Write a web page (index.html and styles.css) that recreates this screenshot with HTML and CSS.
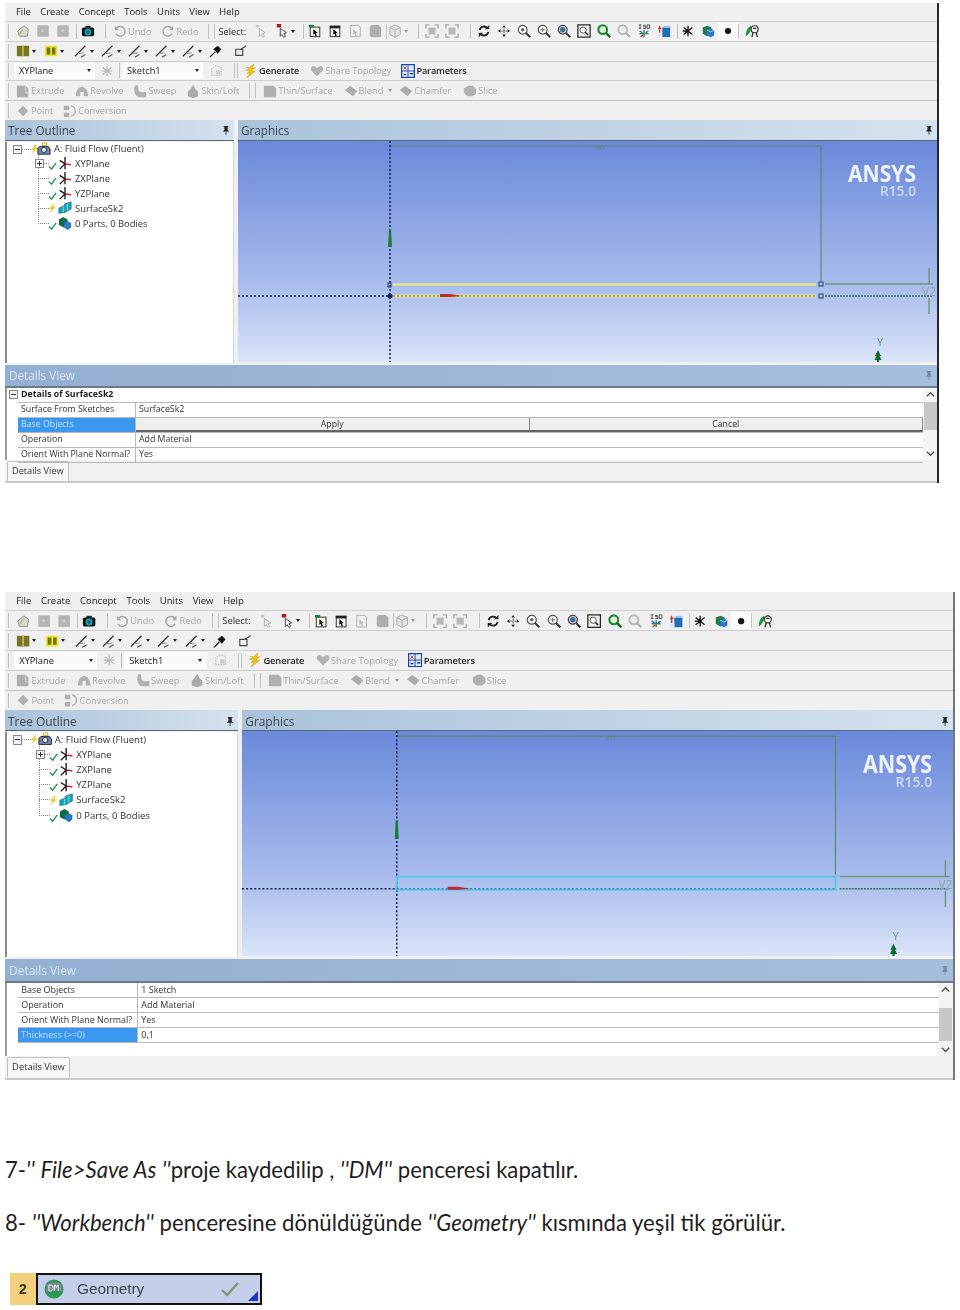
FILE: index.html
```html
<!DOCTYPE html>
<html lang="tr">
<head>
<meta charset="utf-8">
<title>DesignModeler</title>
<link rel="stylesheet" href="styles.css">
</head>
<body>
<svg class="defs" width="0" height="0" aria-hidden="true">
  <symbol id="i-page" viewBox="0 0 16 16"><path d="M2 8l7-6 5 4-1 8H4z" fill="#d8d8d8" stroke="#8a8a8a"/><path d="M3 13l5-7" stroke="#b5c48a" stroke-width="2"/></symbol>
  <symbol id="i-sq" viewBox="0 0 16 16"><rect x="1.500" y="1.500" width="13" height="13" fill="#b4b4b4"/><rect x="6" y="6" width="3" height="3" fill="#cfcfcf"/></symbol>
  <symbol id="i-cam" viewBox="0 0 16 16"><rect x="1" y="4" width="14" height="10" rx="2" fill="#111"/><rect x="5" y="2" width="6" height="3" fill="#222"/><circle cx="8" cy="9" r="4" fill="#19a5b8"/><circle cx="8" cy="9" r="2" fill="#0c5f70"/></symbol>
  <symbol id="i-undo" viewBox="0 0 16 16"><path d="M4 5a5.500 5.500 0 1 1-.5 6" fill="none" stroke="#a5a5a5" stroke-width="1.600"/><path d="M2 2v5h5z" fill="#a5a5a5"/></symbol>
  <symbol id="i-redo" viewBox="0 0 16 16"><path d="M12 5a5.500 5.500 0 1 0 .5 6" fill="none" stroke="#a5a5a5" stroke-width="1.600"/><path d="M14 2v5H9z" fill="#a5a5a5"/></symbol>
  <symbol id="i-sel1" viewBox="0 0 16 16"><path d="M6 5l7 5-3 1 2 3-2 1-2-3-2 2z" fill="#eee" stroke="#aaa"/><rect x="2" y="1" width="4" height="3" fill="#c8c8c8"/></symbol>
  <symbol id="i-sel2" viewBox="0 0 16 16"><path d="M6 5l7 5-3 1 2 3-2 1-2-3-2 2z" fill="#fff" stroke="#333"/><rect x="2" y="0" width="5" height="4" fill="#a81c22"/></symbol>
  <symbol id="i-b1" viewBox="0 0 16 16"><rect x="2.500" y="3.500" width="11" height="11" fill="#f2f2e8" stroke="#222"/><path d="M1 1h6v3H1z" fill="#1a7a4a"/><path d="M6 6l5 4-2 .5 1 3-1.500.5-1-3-1.500 1z" fill="#111"/></symbol>
  <symbol id="i-b2" viewBox="0 0 16 16"><rect x="2.500" y="2.500" width="11" height="12" fill="#f5f5f5" stroke="#222"/><rect x="2" y="2" width="12" height="3" fill="#222"/><path d="M6 6l5 4-2 .5 1 3-1.500.5-1-3-1.500 1z" fill="#111"/></symbol>
  <symbol id="i-b3" viewBox="0 0 16 16"><path d="M3 1.500h9l2 2v11H3z" fill="#efefef" stroke="#aaa"/><path d="M6 6l5 4-2 .5 1 3-1.500.5-1-3-1.500 1z" fill="#bbb"/></symbol>
  <symbol id="i-b4" viewBox="0 0 16 16"><path d="M4 1h8l3 3v10l-2 1H4l-2-2V3z" fill="#aeaeae"/></symbol>
  <symbol id="i-cube" viewBox="0 0 16 16"><path d="M8 1l6 3v8l-6 3-6-3V4z" fill="#e4e4e4" stroke="#aaa"/><path d="M2 4l6 3 6-3M8 7v8" stroke="#aaa" fill="none"/></symbol>
  <symbol id="i-fit1" viewBox="0 0 16 16"><rect x="4" y="4" width="8" height="8" fill="#b8b8b8"/><path d="M1 5V1h4M11 1h4v4M15 11v4h-4M5 15H1v-4" stroke="#aaa" fill="none" stroke-width="1.500"/></symbol>
  <symbol id="i-rot" viewBox="0 0 16 16"><path d="M3 7a5 5 0 0 1 9-2M13 9a5 5 0 0 1-9 2" fill="none" stroke="#222" stroke-width="2"/><path d="M14 1v5H9zM2 15v-5h5z" fill="#222"/></symbol>
  <symbol id="i-pan" viewBox="0 0 16 16"><path d="M8 1l2 3H6zM8 15l-2-3h4zM1 8l3-2v4zM15 8l-3 2V6z" fill="#222"/><path d="M8 4v8M4 8h8" stroke="#777"/></symbol>
  <symbol id="i-zoom" viewBox="0 0 16 16"><circle cx="6.500" cy="6.500" r="5" fill="#fff" stroke="#555" stroke-width="1.400"/><path d="M10 10l5 5" stroke="#333" stroke-width="2.200"/><circle cx="6.500" cy="6.500" r="2" fill="#666"/></symbol>
  <symbol id="i-zplus" viewBox="0 0 16 16"><circle cx="6.500" cy="6.500" r="5" fill="#fff" stroke="#555" stroke-width="1.400"/><path d="M10 10l5 5" stroke="#333" stroke-width="2.200"/><path d="M4 6.500h5M6.500 4v5" stroke="#555"/></symbol>
  <symbol id="i-zdot" viewBox="0 0 16 16"><circle cx="6.500" cy="6.500" r="5" fill="#c9d4e4" stroke="#445" stroke-width="1.400"/><path d="M10 10l5 5" stroke="#333" stroke-width="2.200"/><circle cx="6.500" cy="6.500" r="3" fill="#4a6a8a"/></symbol>
  <symbol id="i-zbox" viewBox="0 0 16 16"><rect x="1" y="1" width="14" height="14" fill="#f4f4f4" stroke="#222" stroke-width="1.400"/><circle cx="7" cy="7" r="3.500" fill="#fff" stroke="#444"/><path d="M9.500 9.500l3 3" stroke="#222" stroke-width="1.800"/></symbol>
  <symbol id="i-zgreen" viewBox="0 0 16 16"><circle cx="6.500" cy="6.500" r="5" fill="#dff0d8" stroke="#1d8a3a" stroke-width="2.400"/><path d="M10 10l5 5" stroke="#146a28" stroke-width="2.600"/></symbol>
  <symbol id="i-zgrey" viewBox="0 0 16 16"><circle cx="6.500" cy="6.500" r="5" fill="#eee" stroke="#b8b8b8" stroke-width="2.200"/><path d="M10 10l5 5" stroke="#b0b0b0" stroke-width="2.400"/></symbol>
  <symbol id="i-iso" viewBox="0 0 16 16"><path d="M2 1h3M3.500 1v4M2 5h3M10 1.500H7.500v1.500H10v2H7M11.500 1h3v4h-3z" fill="none" stroke="#333" stroke-width=".9"/><path d="M8 7v8M3 11h10" stroke="#2a8a4a" stroke-width="1.600"/><path d="M3 8l3 2M13 8l-3 2" stroke="#2a5ac8" stroke-width="1.600"/><path d="M4 15l3-3" stroke="#c33" stroke-width="1.400"/></symbol>
  <symbol id="i-nav" viewBox="0 0 16 16"><path d="M6 4h9v11H6z" fill="#1f6fb4"/><path d="M3 2v8M1 5h4" stroke="#c33" stroke-width="1.500"/><path d="M6 4l2-2h7v2z" fill="#9fc6e8"/><path d="M1 11h5v4H1z" fill="#dbe8f4"/></symbol>
  <symbol id="i-star" viewBox="0 0 16 16"><path d="M8 2v12M3 4l10 8M13 4L3 12M2 8h5" stroke="#111" stroke-width="1.500"/></symbol>
  <symbol id="i-body" viewBox="0 0 16 16"><path d="M2 4l5-2 5 2v7l-5 3-5-3z" fill="#1e7a50"/><path d="M7 7l4-2 4 2v6l-4 2-4-2z" fill="#2a7ac8"/><path d="M7 7l4 2 4-2" stroke="#bcd" fill="none"/></symbol>
  <symbol id="i-dot" viewBox="0 0 16 16"><circle cx="8" cy="8" r="3.500" fill="#111"/></symbol>
  <symbol id="i-leaf" viewBox="0 0 16 16"><path d="M1 14C1 7 3 4 7 2c0 6-2 9-6 12z" fill="#1e9a3a"/><circle cx="11" cy="6" r="4" fill="#fff" stroke="#333" stroke-width="1.400"/><path d="M9 10l-1 5M13 10l1 5M9 5h4" stroke="#333" stroke-width="1.500"/></symbol>
  <symbol id="i-olive" viewBox="0 0 16 16"><rect x="1" y="2" width="14" height="12" fill="#77761f"/><path d="M8 2v12" stroke="#b6b568" stroke-width="2"/></symbol>
  <symbol id="i-yellow" viewBox="0 0 16 16"><rect x="1" y="2" width="14" height="12" fill="#e9e72c"/><rect x="3" y="4" width="4" height="8" fill="#75741a"/><rect x="9" y="4" width="4" height="8" fill="#75741a"/></symbol>
  <symbol id="i-ln" viewBox="0 0 16 16"><path d="M1 14L13 2" stroke="#333" stroke-width="1.400"/><path d="M5 11l6-1" stroke="#999" stroke-width="1.200"/><path d="M8 15l5-3" stroke="#666" stroke-width="1.400"/></symbol>
  <symbol id="i-pin" viewBox="0 0 16 16"><path d="M1 15l6-6" stroke="#111" stroke-width="1.500"/><path d="M5 6l5-4 4 4-4 5z" fill="#111"/></symbol>
  <symbol id="i-flag" viewBox="0 0 16 16"><path d="M2 6h8v7H2z" fill="none" stroke="#444" stroke-width="1.300"/><path d="M8 6l6-4" stroke="#444" stroke-width="1.300"/></symbol>
  <symbol id="i-axis" viewBox="0 0 16 16"><path d="M8 2v12M3 4l10 8M13 4L3 12M2 8h12" stroke="#b8b8b8" stroke-width="1.200"/></symbol>
  <symbol id="i-sk" viewBox="0 0 16 16"><path d="M2 13V5l5-3 6 2v9z" fill="none" stroke="#bbb" stroke-dasharray="2 1"/><path d="M7 7h5v5H7z" fill="#ccc"/></symbol>
  <symbol id="i-bolt" viewBox="0 0 16 16"><path d="M11 0L3 7h4l-4 4 4-1-4 6 10-8H9l4-4-3 1z" fill="#f1c40f" stroke="#c69a08" stroke-width=".5"/><path d="M2 4h4M1 7h3" stroke="#a8c040"/></symbol>
  <symbol id="i-heart" viewBox="0 0 16 16"><path d="M8 14L1 7c-1-6 5-6 7-2 2-4 8-4 7 2z" fill="#b2b2b2"/></symbol>
  <symbol id="i-par" viewBox="0 0 16 16"><rect x=".7" y=".7" width="14.600" height="14.600" fill="#dfe6f4" stroke="#1a46a8" stroke-width="1.400"/><path d="M1 8h14M8 1v14" stroke="#1a46a8"/><path d="M3 3l3 3M3 6l3-3" stroke="#c33"/><path d="M10 11h4M3 12h3" stroke="#224" stroke-width="1.300"/></symbol>
  <symbol id="i-ext" viewBox="0 0 16 16"><path d="M1 2h10l3 3v10H1z" fill="#adadad"/><path d="M11 2v8h3" stroke="#ddd" fill="none"/></symbol>
  <symbol id="i-rev" viewBox="0 0 16 16"><path d="M1 14c0-7 3-10 7-11 4 1 7 4 7 11H10V9H6v5z" fill="#b0b0b0"/></symbol>
  <symbol id="i-swp" viewBox="0 0 16 16"><path d="M2 2c3-2 4 0 4 3 0 4 2 5 9 4v6H7C3 15 0 8 2 2z" fill="#b0b0b0"/></symbol>
  <symbol id="i-skn" viewBox="0 0 16 16"><path d="M8 1l3 5 3 3v5l-6 2-6-2V9l3-3z" fill="#aaa"/></symbol>
  <symbol id="i-thn" viewBox="0 0 16 16"><path d="M1 2h11l3 3v10H1z" fill="#b0b0b0"/></symbol>
  <symbol id="i-bln" viewBox="0 0 16 16"><path d="M1 7l6-5 8 6-5 6z" fill="#acacac"/></symbol>
  <symbol id="i-slc" viewBox="0 0 16 16"><path d="M1 5l5-3h5l4 4v5l-4 3H5L1 10z" fill="#b0b0b0"/></symbol>
  <symbol id="i-pnt" viewBox="0 0 16 16"><path d="M8 2l6 6-6 6-6-6z" fill="#b0b0b0"/></symbol>
  <symbol id="i-cnv" viewBox="0 0 16 16"><rect x="1" y="2" width="6" height="5" fill="#b0b0b0"/><rect x="1" y="10" width="6" height="5" fill="#b0b0b0"/><path d="M9 2c4 1 5 4 5 6s-1 5-5 6" fill="none" stroke="#aaa" stroke-width="1.400"/></symbol>
  <symbol id="i-pinv" viewBox="0 0 10 12"><path d="M2 1h6v1H7v4l2 2H1l2-2V2H2zM4.500 8h1v4h-1z" fill="#222"/></symbol>
  <symbol id="i-tri" viewBox="0 0 16 16"><path d="M8 1v8" stroke="#111" stroke-width="1.500"/><path d="M2 5l6 4M2 15l6-6" stroke="#111" stroke-width="1.500"/><path d="M8 9l7 1" stroke="#c33" stroke-width="1.800"/><path d="M8 9v6" stroke="#111" stroke-width="1.500"/></symbol>
  <symbol id="i-chk" viewBox="0 0 10 10"><path d="M1 6l3 3 5-7" fill="none" stroke="#2a9a4a" stroke-width="1.600"/></symbol>
  <symbol id="i-bz" viewBox="0 0 10 12"><path d="M7 0L1 7h3l-3 5 8-7H6z" fill="#ecd23a"/></symbol>
  <symbol id="i-src" viewBox="0 0 16 16"><path d="M3 5h10l2 3v6H1V7z" fill="#6e8aa8" stroke="#223"/><circle cx="8" cy="9" r="3" fill="#d7e6f2" stroke="#223"/><path d="M6 1h5v3H6z" fill="none" stroke="#c8a818"/></symbol>
  <symbol id="i-srf" viewBox="0 0 16 16"><path d="M1 8l5-2 2-3 7-2v8l-7 4-7 1z" fill="#17a5b8" stroke="#0a5f6c" stroke-width=".7"/><path d="M6 6v7M11 3v8" stroke="#bdeef4" stroke-width=".8"/></symbol>
  <symbol id="i-prt" viewBox="0 0 16 16"><path d="M1 4l5-3 5 3v6l-5 3-5-3z" fill="#106a4a"/><path d="M7 8l4-2 4 2v5l-4 3-4-3z" fill="#2a78c8"/></symbol>
  <symbol id="i-arrow" viewBox="0 0 10 10"><path d="M1 7l4-4 4 4" fill="none" stroke="#555" stroke-width="1.500"/></symbol>
  <symbol id="i-arrowd" viewBox="0 0 10 10"><path d="M1 3l4 4 4-4" fill="none" stroke="#555" stroke-width="1.500"/></symbol>
  <symbol id="i-dm" viewBox="0 0 20 20"><circle cx="10" cy="10" r="9.500" fill="#2a9a56"/><path d="M2 7a9 7 0 0 1 16 0v5H2z" fill="#7d8592"/><path d="M5 6h2a2 3 0 0 1 0 6H5zM10.500 12V6h1l1 3 1-3h1v6" fill="none" stroke="#e8eef4" stroke-width="1"/></symbol>
</svg>

<section class="shot shot-a">
  <nav class="menu"><span>File</span><span>Create</span><span>Concept</span><span>Tools</span><span>Units</span><span>View</span><span>Help</span></nav>
  <div class="tb">
    <i class="grip"></i>
    <span class="btn m4"><svg class="ic"><use href="#i-page"/></svg></span><span class="btn"><svg class="ic"><use href="#i-sq"/></svg></span><span class="btn"><svg class="ic"><use href="#i-sq"/></svg></span>
    <i class="grip m3"></i>
    <span class="btn m1"><svg class="ic"><use href="#i-cam"/></svg></span>
    <i class="grip m7"></i>
    <span class="tool off m7"><svg class="ic"><use href="#i-undo"/></svg>Undo</span>
    <span class="tool off m10"><svg class="ic"><use href="#i-redo"/></svg>Redo</span>
    <i class="grip m10"></i><i class="grip m5"></i>
    <span class="tool m3">Select:</span>
    <span class="btn m5"><svg class="ic"><use href="#i-sel1"/></svg></span>
    <span class="btn m4"><svg class="ic"><use href="#i-sel2"/></svg><i class="drop"></i></span>
    <i class="grip m8"></i>
    <span class="btn m1"><svg class="ic"><use href="#i-b1"/></svg></span><span class="btn"><svg class="ic"><use href="#i-b2"/></svg></span><span class="btn"><svg class="ic"><use href="#i-b3"/></svg></span><span class="btn"><svg class="ic"><use href="#i-b4"/></svg></span>
    <i class="grip m1"></i>
    <span class="btn m1"><svg class="ic"><use href="#i-cube"/></svg><i class="drop pale"></i></span>
    <i class="grip m10"></i>
    <span class="btn m3"><svg class="ic"><use href="#i-fit1"/></svg></span><span class="btn"><svg class="ic"><use href="#i-fit1"/></svg></span>
    <i class="grip m8"></i>
    <span class="btn m3"><svg class="ic"><use href="#i-rot"/></svg></span><span class="btn"><svg class="ic"><use href="#i-pan"/></svg></span><span class="btn"><svg class="ic"><use href="#i-zoom"/></svg></span><span class="btn"><svg class="ic"><use href="#i-zplus"/></svg></span><span class="btn"><svg class="ic"><use href="#i-zdot"/></svg></span><span class="btn"><svg class="ic"><use href="#i-zbox"/></svg></span><span class="btn"><svg class="ic"><use href="#i-zgreen"/></svg></span><span class="btn"><svg class="ic"><use href="#i-zgrey"/></svg></span><span class="btn"><svg class="ic"><use href="#i-iso"/></svg></span><span class="btn"><svg class="ic"><use href="#i-nav"/></svg></span>
    <i class="grip m3"></i>
    <span class="btn"><svg class="ic"><use href="#i-star"/></svg></span><span class="btn"><svg class="ic"><use href="#i-body"/></svg></span><span class="btn lit"><svg class="ic"><use href="#i-dot"/></svg></span>
    <i class="grip"></i>
    <span class="btn m3"><svg class="ic"><use href="#i-leaf"/></svg></span>
  </div>
  <div class="tb">
    <i class="grip"></i>
    <span class="btn w22 m6"><svg class="ic"><use href="#i-olive"/></svg><i class="drop"></i></span>
    <span class="btn w22 m6"><svg class="ic"><use href="#i-yellow"/></svg><i class="drop"></i></span>
    <span class="btn w27 m5"><svg class="ic"><use href="#i-ln"/></svg><i class="drop"></i></span><span class="btn w27"><svg class="ic"><use href="#i-ln"/></svg><i class="drop"></i></span><span class="btn w27"><svg class="ic"><use href="#i-ln"/></svg><i class="drop"></i></span><span class="btn w27"><svg class="ic"><use href="#i-ln"/></svg><i class="drop"></i></span><span class="btn w27"><svg class="ic"><use href="#i-ln"/></svg><i class="drop"></i></span>
    <span class="btn m1"><svg class="ic"><use href="#i-pin"/></svg></span>
    <span class="btn m5"><svg class="ic"><use href="#i-flag"/></svg></span>
  </div>
  <div class="tb">
    <i class="grip"></i>
    <span class="combo m5">XYPlane<i class="drop"></i></span>
    <span class="btn m2"><svg class="ic"><use href="#i-axis"/></svg></span>
    <i class="grip m2"></i>
    <span class="combo m2">Sketch1<i class="drop"></i></span>
    <span class="btn m4"><svg class="ic"><use href="#i-sk"/></svg></span>
    <i class="grip m7"></i><i class="grip m2"></i>
    <span class="tool strong m6"><svg class="ic"><use href="#i-bolt"/></svg>Generate</span>
    <span class="tool off m11"><svg class="ic"><use href="#i-heart"/></svg>Share Topology</span>
    <span class="tool strong m10"><svg class="ic"><use href="#i-par"/></svg>Parameters</span>
  </div>
  <div class="tb">
    <i class="grip"></i>
    <span class="tool off m7"><svg class="ic"><use href="#i-ext"/></svg>Extrude</span>
    <span class="tool off m11"><svg class="ic"><use href="#i-rev"/></svg>Revolve</span>
    <span class="tool off m10"><svg class="ic"><use href="#i-swp"/></svg>Sweep</span>
    <span class="tool off m10"><svg class="ic"><use href="#i-skn"/></svg>Skin/Loft</span>
    <i class="grip m10"></i><i class="grip m5"></i>
    <span class="tool off m7"><svg class="ic"><use href="#i-thn"/></svg>Thin/Surface</span>
    <span class="tool off m11"><svg class="ic"><use href="#i-bln"/></svg>Blend<i class="drop pale m4"></i></span>
    <span class="tool off m7"><svg class="ic"><use href="#i-bln"/></svg>Chamfer</span>
    <span class="tool off m12"><svg class="ic"><use href="#i-slc"/></svg>Slice</span>
  </div>
  <div class="tb last">
    <i class="grip"></i>
    <span class="tool off m7"><svg class="ic"><use href="#i-pnt"/></svg>Point</span>
    <span class="tool off m10"><svg class="ic"><use href="#i-cnv"/></svg>Conversion</span>
  </div>
  <div class="panes">
    <aside class="tree-pane">
      <header class="pane-head">Tree Outline<svg class="pin"><use href="#i-pinv"/></svg></header>
      <ul class="tree">
        <li class="root"><i class="box minus"></i><svg class="bz"><use href="#i-bz"/></svg><svg class="ic"><use href="#i-src"/></svg><span>A: Fluid Flow (Fluent)</span></li>
        <li><i class="box plus"></i><svg class="ck"><use href="#i-chk"/></svg><svg class="ic"><use href="#i-tri"/></svg><span>XYPlane</span></li>
        <li><svg class="ck"><use href="#i-chk"/></svg><svg class="ic"><use href="#i-tri"/></svg><span>ZXPlane</span></li>
        <li><svg class="ck"><use href="#i-chk"/></svg><svg class="ic"><use href="#i-tri"/></svg><span>YZPlane</span></li>
        <li><svg class="bz"><use href="#i-bz"/></svg><svg class="ic"><use href="#i-srf"/></svg><span>SurfaceSk2</span></li>
        <li class="end"><svg class="ck"><use href="#i-chk"/></svg><svg class="ic"><use href="#i-prt"/></svg><span>0 Parts, 0 Bodies</span></li>
      </ul>
    </aside>
    <main class="gfx-pane">
      <header class="pane-head">Graphics<svg class="pin"><use href="#i-pinv"/></svg></header>
      <div class="canvas">
        <svg class="sketch" viewBox="0 0 697 221" width="697" height="221">
          <path d="M152 5H583V140" fill="none" stroke="#5a8a66" stroke-width="1.200"/>
          <text x="358" y="9" class="dim">H1</text>
          <path d="M152 0V221" stroke="#101c50" stroke-width="1.500" stroke-dasharray="2 2"/>
          <path d="M0 155H152" stroke="#101c50" stroke-width="1.500" stroke-dasharray="2 2"/>
          <path d="M151 88l2 0 1 18h-4z" fill="#1e7a3a"/>
          <path d="M155 143.500H578" stroke="#e4e48c" stroke-width="2.500"/>
          <path d="M155 155H578" stroke="#e4e48c" stroke-width="3"/>
          <path d="M155 155H578" stroke="#5a6a5a" stroke-dasharray="2 2"/>
          <rect x="150" y="142" width="3" height="4" fill="none" stroke="#223a6a"/>
          <rect x="581" y="141" width="4" height="4" fill="none" stroke="#223a6a"/>
          <rect x="581" y="153" width="4" height="4" fill="none" stroke="#223a6a"/>
          <circle cx="152" cy="155" r="2.500" fill="#0a1a60"/>
          <path d="M202 153h10l12 2-12 1h-10z" fill="#c0282c"/>
          <path d="M587 143H695" stroke="#6f9a78" stroke-width="1.500"/>
          <path d="M587 155H695" stroke="#3d6a5a" stroke-width="1.500" stroke-dasharray="2 1"/>
          <path d="M691 127V143M691 157V173" stroke="#6f9a78" stroke-width="1.500"/>
          <text x="684" y="155" class="dim big">V2</text>
          <text x="639" y="205" class="dim axis">Y</text>
          <path d="M640 209l3 6h-1.500l2 4h-2.500v3h-2v-3h-2.500l2-4h-1.500z" fill="#0e6a2c"/>
          <text x="610" y="41" class="logo" textLength="68" lengthAdjust="spacingAndGlyphs">ANSYS</text>
          <text x="642" y="55" class="rel" textLength="36" lengthAdjust="spacingAndGlyphs">R15.0</text>
        </svg>
      </div>
    </main>
  </div>
  <section class="details">
    <header class="details-head">Details View<svg class="pin faint"><use href="#i-pinv"/></svg></header>
    <div class="details-body">
      <div class="grid">
        <div class="row group"><i class="box gbox"></i><span class="full">Details of SurfaceSk2</span></div>
        <div class="row"><span class="k">Surface From Sketches</span><span class="v">SurfaceSk2</span></div>
        <div class="row"><span class="k sel">Base Objects</span><span class="v actions"><b>Apply</b><b>Cancel</b></span></div>
        <div class="row"><span class="k">Operation</span><span class="v">Add Material</span></div>
        <div class="row"><span class="k">Orient With Plane Normal?</span><span class="v">Yes</span></div>
      </div>
      <div class="scroll"><svg class="sa"><use href="#i-arrow"/></svg><i class="thumb thumb-a"></i><svg class="sa"><use href="#i-arrowd"/></svg></div>
    </div>
    <div class="tabs"><span class="tab">Details View</span></div>
  </section>
</section>

<section class="shot shot-b">
  <nav class="menu"><span>File</span><span>Create</span><span>Concept</span><span>Tools</span><span>Units</span><span>View</span><span>Help</span></nav>
  <div class="tb">
    <i class="grip"></i>
    <span class="btn m4"><svg class="ic"><use href="#i-page"/></svg></span><span class="btn"><svg class="ic"><use href="#i-sq"/></svg></span><span class="btn"><svg class="ic"><use href="#i-sq"/></svg></span>
    <i class="grip m3"></i>
    <span class="btn m1"><svg class="ic"><use href="#i-cam"/></svg></span>
    <i class="grip m7"></i>
    <span class="tool off m7"><svg class="ic"><use href="#i-undo"/></svg>Undo</span>
    <span class="tool off m10"><svg class="ic"><use href="#i-redo"/></svg>Redo</span>
    <i class="grip m10"></i><i class="grip m5"></i>
    <span class="tool m3">Select:</span>
    <span class="btn m5"><svg class="ic"><use href="#i-sel1"/></svg></span>
    <span class="btn m4"><svg class="ic"><use href="#i-sel2"/></svg><i class="drop"></i></span>
    <i class="grip m8"></i>
    <span class="btn m1"><svg class="ic"><use href="#i-b1"/></svg></span><span class="btn"><svg class="ic"><use href="#i-b2"/></svg></span><span class="btn"><svg class="ic"><use href="#i-b3"/></svg></span><span class="btn"><svg class="ic"><use href="#i-b4"/></svg></span>
    <i class="grip m1"></i>
    <span class="btn m1"><svg class="ic"><use href="#i-cube"/></svg><i class="drop pale"></i></span>
    <i class="grip m10"></i>
    <span class="btn m3"><svg class="ic"><use href="#i-fit1"/></svg></span><span class="btn"><svg class="ic"><use href="#i-fit1"/></svg></span>
    <i class="grip m8"></i>
    <span class="btn m3"><svg class="ic"><use href="#i-rot"/></svg></span><span class="btn"><svg class="ic"><use href="#i-pan"/></svg></span><span class="btn"><svg class="ic"><use href="#i-zoom"/></svg></span><span class="btn"><svg class="ic"><use href="#i-zplus"/></svg></span><span class="btn"><svg class="ic"><use href="#i-zdot"/></svg></span><span class="btn"><svg class="ic"><use href="#i-zbox"/></svg></span><span class="btn"><svg class="ic"><use href="#i-zgreen"/></svg></span><span class="btn"><svg class="ic"><use href="#i-zgrey"/></svg></span><span class="btn"><svg class="ic"><use href="#i-iso"/></svg></span><span class="btn"><svg class="ic"><use href="#i-nav"/></svg></span>
    <i class="grip m3"></i>
    <span class="btn"><svg class="ic"><use href="#i-star"/></svg></span><span class="btn"><svg class="ic"><use href="#i-body"/></svg></span><span class="btn lit"><svg class="ic"><use href="#i-dot"/></svg></span>
    <i class="grip"></i>
    <span class="btn m3"><svg class="ic"><use href="#i-leaf"/></svg></span>
  </div>
  <div class="tb">
    <i class="grip"></i>
    <span class="btn w22 m6"><svg class="ic"><use href="#i-olive"/></svg><i class="drop"></i></span>
    <span class="btn w22 m6"><svg class="ic"><use href="#i-yellow"/></svg><i class="drop"></i></span>
    <span class="btn w27 m5"><svg class="ic"><use href="#i-ln"/></svg><i class="drop"></i></span><span class="btn w27"><svg class="ic"><use href="#i-ln"/></svg><i class="drop"></i></span><span class="btn w27"><svg class="ic"><use href="#i-ln"/></svg><i class="drop"></i></span><span class="btn w27"><svg class="ic"><use href="#i-ln"/></svg><i class="drop"></i></span><span class="btn w27"><svg class="ic"><use href="#i-ln"/></svg><i class="drop"></i></span>
    <span class="btn m1"><svg class="ic"><use href="#i-pin"/></svg></span>
    <span class="btn m5"><svg class="ic"><use href="#i-flag"/></svg></span>
  </div>
  <div class="tb">
    <i class="grip"></i>
    <span class="combo m5">XYPlane<i class="drop"></i></span>
    <span class="btn m2"><svg class="ic"><use href="#i-axis"/></svg></span>
    <i class="grip m2"></i>
    <span class="combo m2">Sketch1<i class="drop"></i></span>
    <span class="btn m4"><svg class="ic"><use href="#i-sk"/></svg></span>
    <i class="grip m7"></i><i class="grip m2"></i>
    <span class="tool strong m6"><svg class="ic"><use href="#i-bolt"/></svg>Generate</span>
    <span class="tool off m11"><svg class="ic"><use href="#i-heart"/></svg>Share Topology</span>
    <span class="tool strong m10"><svg class="ic"><use href="#i-par"/></svg>Parameters</span>
  </div>
  <div class="tb">
    <i class="grip"></i>
    <span class="tool off m7"><svg class="ic"><use href="#i-ext"/></svg>Extrude</span>
    <span class="tool off m11"><svg class="ic"><use href="#i-rev"/></svg>Revolve</span>
    <span class="tool off m10"><svg class="ic"><use href="#i-swp"/></svg>Sweep</span>
    <span class="tool off m10"><svg class="ic"><use href="#i-skn"/></svg>Skin/Loft</span>
    <i class="grip m10"></i><i class="grip m5"></i>
    <span class="tool off m7"><svg class="ic"><use href="#i-thn"/></svg>Thin/Surface</span>
    <span class="tool off m11"><svg class="ic"><use href="#i-bln"/></svg>Blend<i class="drop pale m4"></i></span>
    <span class="tool off m7"><svg class="ic"><use href="#i-bln"/></svg>Chamfer</span>
    <span class="tool off m12"><svg class="ic"><use href="#i-slc"/></svg>Slice</span>
  </div>
  <div class="tb last">
    <i class="grip"></i>
    <span class="tool off m7"><svg class="ic"><use href="#i-pnt"/></svg>Point</span>
    <span class="tool off m10"><svg class="ic"><use href="#i-cnv"/></svg>Conversion</span>
  </div>
  <div class="panes">
    <aside class="tree-pane">
      <header class="pane-head">Tree Outline<svg class="pin"><use href="#i-pinv"/></svg></header>
      <ul class="tree">
        <li class="root"><i class="box minus"></i><svg class="bz"><use href="#i-bz"/></svg><svg class="ic"><use href="#i-src"/></svg><span>A: Fluid Flow (Fluent)</span></li>
        <li><i class="box plus"></i><svg class="ck"><use href="#i-chk"/></svg><svg class="ic"><use href="#i-tri"/></svg><span>XYPlane</span></li>
        <li><svg class="ck"><use href="#i-chk"/></svg><svg class="ic"><use href="#i-tri"/></svg><span>ZXPlane</span></li>
        <li><svg class="ck"><use href="#i-chk"/></svg><svg class="ic"><use href="#i-tri"/></svg><span>YZPlane</span></li>
        <li><svg class="bz"><use href="#i-bz"/></svg><svg class="ic"><use href="#i-srf"/></svg><span>SurfaceSk2</span></li>
        <li class="end"><svg class="ck"><use href="#i-chk"/></svg><svg class="ic"><use href="#i-prt"/></svg><span>0 Parts, 0 Bodies</span></li>
      </ul>
    </aside>
    <main class="gfx-pane">
      <header class="pane-head">Graphics<svg class="pin"><use href="#i-pinv"/></svg></header>
      <div class="canvas">
        <svg class="sketch" viewBox="0 0 697 221" width="697" height="221">
          <path d="M152 5H583V141" fill="none" stroke="#5a8a66" stroke-width="1.200"/>
          <text x="358" y="9" class="dim">H1</text>
          <path d="M152 0V221" stroke="#101c50" stroke-width="1.500" stroke-dasharray="2 2"/>
          <path d="M0 155H152" stroke="#101c50" stroke-width="1.500" stroke-dasharray="2 2"/>
          <path d="M151 88l2 0 1 18h-4z" fill="#1e7a3a"/>
          <rect x="152" y="143" width="431" height="13" fill="none" stroke="#45cfe6" stroke-width="1.600"/>
          <path d="M152 155H583" stroke="#2f6a9a" stroke-dasharray="2 2"/>
          <path d="M202 153h10l12 2-12 1h-10z" fill="#c0282c"/>
          <path d="M587 143H695" stroke="#6f9a78" stroke-width="1.500"/>
          <path d="M587 155H695" stroke="#3d6a5a" stroke-width="1.500" stroke-dasharray="2 1"/>
          <path d="M691 127V143M691 157V173" stroke="#6f9a78" stroke-width="1.500"/>
          <text x="684" y="155" class="dim big">V2</text>
          <text x="639" y="205" class="dim axis">Y</text>
          <path d="M640 209l3 6h-1.500l2 4h-2.500v3h-2v-3h-2.500l2-4h-1.500z" fill="#0e6a2c"/>
          <text x="610" y="41" class="logo" textLength="68" lengthAdjust="spacingAndGlyphs">ANSYS</text>
          <text x="642" y="55" class="rel" textLength="36" lengthAdjust="spacingAndGlyphs">R15.0</text>
        </svg>
      </div>
    </main>
  </div>
  <section class="details">
    <header class="details-head">Details View<svg class="pin faint"><use href="#i-pinv"/></svg></header>
    <div class="details-body">
      <div class="grid">
        <div class="row"><span class="k">Base Objects</span><span class="v">1 Sketch</span></div>
        <div class="row"><span class="k">Operation</span><span class="v">Add Material</span></div>
        <div class="row"><span class="k">Orient With Plane Normal?</span><span class="v">Yes</span></div>
        <div class="row"><span class="k sel">Thickness (&gt;=0)</span><span class="v">0,1</span></div>
      </div>
      <div class="scroll"><svg class="sa"><use href="#i-arrow"/></svg><i class="thumb thumb-b"></i><svg class="sa"><use href="#i-arrowd"/></svg></div>
    </div>
    <div class="tabs"><span class="tab">Details View</span></div>
  </section>
</section>

<article class="doc">
  <p>7-<em>''</em> <em>File&gt;Save As</em> <em>''</em>proje kaydedilip , <em>''DM''</em> penceresi kapatılır.</p>
  <p>8- <em>''Workbench''</em> penceresine dönüldüğünde <em>''Geometry''</em> kısmında yeşil tik görülür.</p>
</article>

<div class="cell">
  <span class="cell-num">2</span>
  <span class="cell-main">
    <svg class="cell-ic"><use href="#i-dm"/></svg>
    <span class="cell-name">Geometry</span>
    <svg class="cell-ok" viewBox="0 0 20 16"><path d="M2 9l5 5L18 2" fill="none" stroke="#7a9a7a" stroke-width="2.400"/></svg>
    <i class="cell-flag"></i>
  </span>
</div>
</body>
</html>
```
FILE: styles.css
```css
* { box-sizing: border-box; }
html, body { margin: 0; background: #fff; }
body { width: 960px; height: 1310px; overflow: hidden; padding: 3px 0 0 5px; font-family: "Open Sans", "Liberation Sans", sans-serif; }
.defs { position: absolute; }
i { font-style: normal; display: block; }

.shot { display: flex; flex-direction: column; background: #f0f0f0; color: #2b2b2b; font-size: 9.200px; filter: blur(.35px); }
.shot-a { width: 934px; height: 480px; border-right: 2px solid #25272b; --tb-h: 19.800px; --row-h: 15px; }
.shot-b { width: 933px; height: 479.500px; margin-top: 107px; zoom: 1.018; border-right: 2px solid #777; --tb-h: 19.600px; --row-h: 14.700px; }

.menu { height: 18px; display: flex; align-items: center; gap: 9.500px; padding: 0 0 2px 11px; flex: none; color: #222; font-size: 9.400px; }

.tb { height: var(--tb-h); display: flex; align-items: center; border-top: 1px solid #cfcfcf; padding-left: 3px; flex: none; }
.tb.last { border-top: 1px solid #c4c4c4; }
.grip { width: 1px; height: 15px; background: #c2c2c2; flex: none; }
.btn { width: 20px; height: 17px; display: flex; align-items: center; justify-content: center; flex: none; }
.w22 { width: 22px; }
.w27 { width: 27px; }
.lit { background: #fbfbfb; }
.ic { width: 14px; height: 14px; flex: none; display: block; }
.tool { display: flex; align-items: center; gap: 1px; flex: none; white-space: nowrap; }
.off { color: #a8a8a8; }
.strong { color: #1f1f1f; font-weight: 600; letter-spacing: -.15px; }
.drop { width: 0; height: 0; border: 2.500px solid transparent; border-top: 3px solid #222; border-bottom: 0; margin-left: 2px; flex: none; }
.drop.pale { border-top-color: #999; }
.combo { width: 81px; height: 16px; background: #fbfbfb; display: flex; align-items: center; justify-content: space-between; padding: 0 4px 0 5px; color: #222; flex: none; }

.m1 { margin-left: 1px; } .m2 { margin-left: 2px; } .m3 { margin-left: 3px; } .m4 { margin-left: 4px; }
.m5 { margin-left: 5px; } .m6 { margin-left: 6px; } .m7 { margin-left: 7px; } .m8 { margin-left: 8px; }
.m10 { margin-left: 10px; } .m11 { margin-left: 11px; } .m12 { margin-left: 12px; }

.panes { display: flex; gap: 4px; flex: none; }
.pane-head { height: 21px; display: flex; align-items: center; justify-content: space-between; padding: 1px 4px 0 3px; font-size: 11.700px; color: #39444f; background: linear-gradient(90deg, #aac3da, #d5e2ef); border-bottom: 1px solid #5a6a7a; }
.pin { width: 8px; height: 10px; flex: none; }
.pin.faint { opacity: .35; }

.tree-pane { width: 229px; flex: none; }
.tree { margin: 0; padding: 0; list-style: none; height: 221px; background: #fff; border-left: 2px solid #8a8a8a; border-right: 1px solid #d5d5d5; }
.tree li { position: relative; height: 15px; display: flex; align-items: center; padding-left: 41px; gap: 1px; }
.tree li:first-child { margin-top: 1px; height: 14px; padding-left: 23px; }
.tree li span { margin-left: 2px; color: #333; font-size: 9.400px; white-space: nowrap; }
.tree li::before { content: ""; position: absolute; left: 31px; top: 7px; width: 11px; border-top: 1px dotted #888; }
.tree li:not(.root)::after { content: ""; position: absolute; left: 31px; top: -7px; height: 15px; border-left: 1px dotted #888; }
.tree li.root::before { left: 8px; width: 18px; }
.box { position: absolute; width: 9px; height: 9px; background: #f4f4f4; border: 1px solid #888; z-index: 1; }
.box.minus { left: 6px; top: 3px; }
.box.plus { left: 28px; top: 3px; }
.box::before { content: ""; position: absolute; left: 1px; right: 1px; top: 3px; border-top: 1px solid #333; }
.box.plus::after { content: ""; position: absolute; top: 1px; bottom: 1px; left: 3px; border-left: 1px solid #333; }
.ck { width: 9px; height: 9px; position: relative; z-index: 1; align-self: flex-end; margin-bottom: 1px; }
.bz { width: 9px; height: 12px; position: relative; z-index: 1; }
.tree .root .bz { margin-right: -3px; }
.root .ic { position: relative; z-index: 1; }

.gfx-pane { flex: 1; min-width: 0; }
.canvas { height: 221px; background: linear-gradient(180deg, #6a89da 0%, #a9bcec 65%, #dbe5f9 100%); overflow: hidden; }
.sketch { display: block; }
.dim { font: 7.500px "Open Sans", sans-serif; fill: #5f8f6a; }
.dim.big { font-size: 12px; fill: #8aa6ae; }
.dim.axis { font-size: 11px; fill: #5f9a7a; }
.logo { font: 700 24px "Open Sans", sans-serif; fill: #eef3fb; }
.rel { font: 600 14px "Open Sans", sans-serif; fill: #cfdcf2; }

.details { margin-top: 2px; flex: 1; display: flex; flex-direction: column; }
.details-head { height: 23px; flex: none; display: flex; align-items: center; justify-content: space-between; padding: 0 4px; font-size: 11.700px; color: #dbe6f2; background: linear-gradient(90deg, #93b0d2, #a6bedb); border-bottom: 2px solid #6a7a8c; }
.details-body { height: 72px; flex: none; display: flex; background: #fff; border-left: 2px solid #9a9a9a; }
.grid { flex: 1; padding-left: 11px; display: flex; flex-direction: column; }
.row { height: var(--row-h); display: flex; align-items: stretch; border-bottom: 1px solid #b8b8b8; flex: none; position: relative; font-size: 8.800px; color: #333; }
.k { width: 118px; flex: none; padding-left: 3px; line-height: 13.500px; white-space: nowrap; overflow: hidden; border-right: 1px solid #b8b8b8; }
.k.sel { background: #3b97ee; color: #bfe0fb; }
.v { flex: 1; padding-left: 3px; line-height: 13.500px; white-space: nowrap; }
.group { font-weight: 700; color: #1f1f1f; }
.full { padding-left: 3px; line-height: 13.500px; }
.gbox { left: -9px; top: 2px; }
.actions { display: flex; padding: 0; }
.actions b { flex: 1; text-align: center; font-weight: 400; background: #f0f0f0; border-bottom: 2px solid #666; border-right: 1px solid #888; }
.scroll { width: 14px; flex: none; background: #f4f4f4; display: flex; flex-direction: column; align-items: center; padding: 2px 0; }
.sa { width: 9px; height: 9px; flex: none; }
.sa:last-child { margin-top: auto; }
.thumb { width: 13px; background: #c8c8c8; }
.thumb-a { height: 28px; margin-top: 3px; }
.thumb-b { height: 32px; margin-top: 14px; }
.tabs { flex: 1; background: #f2f2f2; border-bottom: 2px solid #c9c9c9; padding-left: 2px; padding-top: 1px; }
.tab { display: inline-block; height: 20px; line-height: 18px; padding: 0 4px; font-size: 9.200px; color: #333; background: #f8f8f8; border: 1px solid #c0c0c0; border-bottom: 0; border-radius: 2px 2px 0 0; }

.doc { margin-top: 77px; font-family: "Lato", "Liberation Sans", sans-serif; font-size: 22.150px; line-height: 26px; color: #1f1f1f; }
.doc p { margin: 0 0 27px; white-space: nowrap; }
.cell { display: flex; margin: 37px 0 0 5px; height: 32px; width: 252px; filter: blur(.4px); }
.cell-num { width: 26px; background: #f5d07c; color: #3a3520; font: 700 14px "Liberation Sans", sans-serif; display: flex; align-items: center; justify-content: center; }
.cell-main { flex: 1; border: 2px solid #111; background: #c5cfe9; display: flex; align-items: center; padding-left: 6px; position: relative; }
.cell-ic { width: 20px; height: 20px; flex: none; }
.cell-name { margin-left: 13px; font: 15.500px "Liberation Sans", sans-serif; color: #3c4350; letter-spacing: -.1px; }
.cell-ok { width: 20px; height: 16px; margin-left: 76px; flex: none; }
.cell-flag { position: absolute; right: 2px; bottom: 2px; width: 0; height: 0; border-left: 10px solid transparent; border-bottom: 10px solid #1f33c8; }
```
